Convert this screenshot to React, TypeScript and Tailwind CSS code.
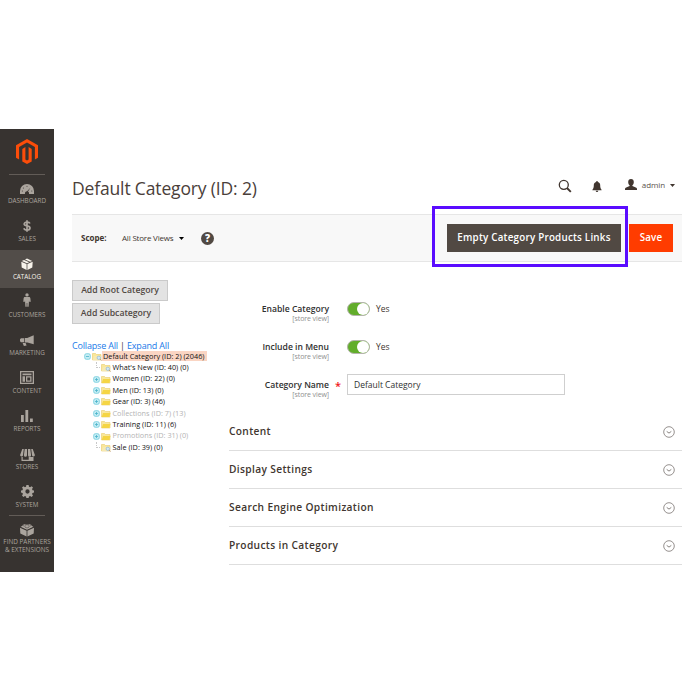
import type { ReactNode } from 'react'
import { clsx } from 'clsx'

type NavItem = {
  label: string
  icon: ReactNode
  active?: boolean
}

type TreeNode = {
  label: string
  /** Leaf nodes show a folder with a magnifier and no expander. */
  leaf?: boolean
  muted?: boolean
}

const navItems: NavItem[] = [
  {
    label: 'DASHBOARD',
    icon: (
      <svg viewBox="0 0 14 10" className="h-[10px] w-[14px]" fill="currentColor">
        <path d="M0 10V7a7 7 0 0 1 14 0v3H9a2.1 2.1 0 0 0-1-2.4l2.6-4.2-3.5 3.9A2.1 2.1 0 0 0 5 10Z" />
        <g fill="#373330">
          <circle cx="2.3" cy="7" r=".5" />
          <circle cx="3.4" cy="4" r=".5" />
          <circle cx="7" cy="2.2" r=".5" />
          <circle cx="11.8" cy="7" r=".5" />
        </g>
      </svg>
    ),
  },
  {
    label: 'SALES',
    icon: (
      <svg viewBox="0 0 8 12" className="h-[12px] w-[8px]" fill="none" stroke="currentColor" strokeWidth="1.7">
        <path d="M6.9 3.6C6.6 2.6 5.5 2.1 4.1 2.1 2.4 2.1 1.2 2.8 1.2 4c0 2.7 5.8 1.1 5.8 4 0 1.3-1.3 2-3 2C2.3 10 1.2 9.3.9 8.2M4 .2v11.6" />
      </svg>
    ),
  },
  {
    label: 'CATALOG',
    active: true,
    icon: (
      <svg viewBox="0 0 12 12" className="h-[12px] w-[12px]" fill="currentColor">
        <path d="M.3 3.7 5.6 6v6L.7 9.6ZM11.7 3.7 6.4 6v6l4.9-2.4ZM.8 2.9 3 2l5.2 2.3L6 5.3ZM4 1.6 6 .6l5.2 2.3-2.1.9Z" />
      </svg>
    ),
  },
  {
    label: 'CUSTOMERS',
    icon: (
      <svg viewBox="0 0 8 14" className="mb-px h-[14px] w-[8px]" fill="currentColor">
        <circle cx="4" cy="1.9" r="1.7" />
        <path d="M2 4h4c1 0 1.3.7 1.4 1.6l.3 3.2-1.3.3-.4-1.6-.4 6.3H4.3V10h-.6v3.8H2.4L2 7.5l-.4 1.6-1.3-.3.3-3.2C.7 4.7 1 4 2 4Z" />
      </svg>
    ),
  },
  {
    label: 'MARKETING',
    icon: (
      <svg viewBox="0 0 14 11" className="h-[11px] w-[14px]" fill="currentColor">
        <path d="M13.7.2v9L7.5 7.4H4.7V3.1h2.5ZM0 4.2l1-1h3v4.1H1l-1-1ZM2.6 7.9h3l1 2.5-2.7.5Z" />
      </svg>
    ),
  },
  {
    label: 'CONTENT',
    icon: (
      <svg viewBox="0 0 14 13" className="h-[13px] w-[14px]" fill="currentColor">
        <path fillRule="evenodd" d="M0 0h14v13H0Zm1.3 1.3v10.4h11.4V1.3Z" />
        <path fillRule="evenodd" d="M2.5 2.4h9v1.9h-9ZM2.5 5.2H5v5.5H2.5ZM6 5.2h5.5v5.5H6Zm1.3 1.3v2.9h2.9V6.5Z" />
      </svg>
    ),
  },
  {
    label: 'REPORTS',
    icon: (
      <svg viewBox="0 0 12 12" className="h-[12px] w-[12px]" fill="currentColor">
        <path d="M0 5h2.8v7H0ZM4.4 0h2.8v12H4.4ZM9 8.6h2.8V12H9Z" />
      </svg>
    ),
  },
  {
    label: 'STORES',
    icon: (
      <svg viewBox="0 0 15 12" className="-mb-px h-[12px] w-[15px]" fill="currentColor">
        <path d="M2.3 0h1.5L3 6.2A1.4 1.4 0 0 1 .1 6ZM4.7 0h2.3v6.2a1.5 1.5 0 0 1-3.1 0ZM8 0h2.3l.8 6.2a1.5 1.5 0 0 1-3.1 0ZM11.2 0h1.5l2.2 6a1.4 1.4 0 0 1-2.9.2ZM1.5 8h1.2v2.7h6V8h4.8v4h-12Z" />
      </svg>
    ),
  },
  {
    label: 'SYSTEM',
    icon: (
      <svg viewBox="0 0 14 14" className="size-[13px]" fill="currentColor">
        <path
          fillRule="evenodd"
          d="M5.8 0h2.4l.4 1.9 1.2.5L11.4 1.3l1.5 1.5-1 1.6.5 1.2 1.6.3v2.3l-1.6.4-.5 1.2 1 1.6-1.5 1.6-1.6-1.1-1.2.5-.4 1.9H5.8l-.4-1.9-1.2-.5-1.6 1.1-1.5-1.6 1-1.6-.5-1.2L0 8.200V5.900l1.6-.3.5-1.2-1-1.6 1.5-1.5 1.6 1.1 1.2-.5ZM7 4.7a2.3 2.3 0 1 0 0 4.6 2.3 2.3 0 0 0 0-4.6Z"
        />
      </svg>
    ),
  },
]

const treeNodes: TreeNode[] = [
  { label: "What's New (ID: 40) (0)", leaf: true },
  { label: 'Women (ID: 22) (0)' },
  { label: 'Men (ID: 13) (0)' },
  { label: 'Gear (ID: 3) (46)' },
  { label: 'Collections (ID: 7) (13)', muted: true },
  { label: 'Training (ID: 11) (6)' },
  { label: 'Promotions (ID: 31) (0)', muted: true },
  { label: 'Sale (ID: 39) (0)', leaf: true },
]

const sections = ['Content', 'Display Settings', 'Search Engine Optimization', 'Products in Category']

function MagentoLogo() {
  return (
    <svg viewBox="0 0 22 25" className="h-[25px] w-[22px]" fill="#fb4d0a">
      <path d="M11 0 22 6.3v12.5l-3.1 1.8V8.1L11 3.6 3.1 8.1v12.5L0 18.8V6.3Z" />
      <path d="M6.3 9.9 9.4 8.1v12.5l1.6.9 1.6-.9V8.1l3.1 1.8v12.5L11 25l-4.7-2.6Z" />
    </svg>
  )
}

function Sidebar() {
  return (
    <nav className="flex h-[443px] w-[54px] shrink-0 flex-col items-center bg-[#373330] text-[#aaa49d]">
      <div className="-mb-px flex h-[46px] w-9 shrink-0 justify-center border-b border-[#625c57] pt-[10px]">
        <MagentoLogo />
      </div>
      {navItems.map((item) => (
        <div
          key={item.label}
          className={clsx(
            'flex h-[38px] w-full shrink-0 flex-col items-center',
            item.active && 'bg-[#524d49] text-[#f7f3eb]',
          )}
        >
          <span className="flex h-5 items-end">{item.icon}</span>
          <span className="mt-[2px] text-[6.3px] leading-[10px] whitespace-nowrap">{item.label}</span>
        </div>
      ))}
      <div className="-mt-px flex w-9 flex-col items-center border-t border-[#625c57] pt-[7px]">
        <svg viewBox="0 0 14 13" className="h-[14px] w-[14px]" fill="currentColor">
          <path d="M0 4.3 6.6 7.2V13L.3 9.9ZM14 4.3 7.4 7.2V13l6.3-3.1Z" />
          <path d="m.6 3.300 2-1V1.400L4.500.7l1.700.6L7 1l1 .3L9.600.7l1.900.7v.9l1.900 1L7 6.300Z" />
          <path d="m2.800 2 1.800.7L6.300 2M7.700 2l1.800.7 1.700-.7M5 3.700l2 .8 2-.8" fill="none" stroke="#373330" strokeWidth=".5" />
        </svg>
        <span className="mt-px text-center text-[6.4px] leading-[8px] whitespace-nowrap">
          FIND PARTNERS
          <br />
          &amp; EXTENSIONS
        </span>
      </div>
    </nav>
  )
}

function Header() {
  return (
    <header className="flex h-[85px] items-center justify-between pt-[33px] pr-[7px]">
      <h1 className="text-[17.5px] leading-6 tracking-[-0.15px] whitespace-nowrap text-[#4a403a]">
        Default Category (ID: 2)
      </h1>
      <div className="flex items-center text-[#41362f]">
        <svg viewBox="0 0 14 14" className="mt-[-4px] size-[14px]" fill="none" stroke="currentColor">
          <circle cx="5.8" cy="5.8" r="4.5" strokeWidth="1.3" />
          <path d="m9 9 3.8 3.8" strokeWidth="1.9" />
        </svg>
        <svg viewBox="0 0 10 11" className="mt-[-3px] ml-5 h-[11px] w-[10px]" fill="currentColor">
          <path d="M5 0c.6 0 .9.4.9.9C7.5 1.3 8.200 2.500 8.200 4.200c0 2.500.5 3.400 1.400 4.500v.5H.4v-.5C1.300 7.600 1.800 6.700 1.800 4.200 1.800 2.500 2.500 1.300 4.100.9 4.100.4 4.400 0 5 0ZM3.700 9.800h2.600a1.300 1.200 0 0 1-2.600 0Z" />
        </svg>
        <svg viewBox="0 0 12 11" className="mt-[-7px] ml-[23px] h-[11px] w-[12px]" fill="currentColor">
          <path d="M6 0c1.8 0 2.8 1.2 2.8 3 0 1.5-.5 2.6-1.4 3.3v.8l3.4 1.3c.8.3 1.2.8 1.2 1.6v1H0v-1c0-.8.4-1.3 1.2-1.6l3.4-1.3v-.8C3.7 5.6 3.2 4.5 3.2 3 3.2 1.2 4.2 0 6 0Z" />
        </svg>
        <span className="mt-[-7px] ml-[5px] text-[8px] tracking-[-0.1px] text-[#5c534d]">admin</span>
        <svg viewBox="0 0 5 3" className="mt-[-6px] ml-[5px] h-[3px] w-[5px]" fill="currentColor">
          <path d="M0 0h5L2.5 3Z" />
        </svg>
      </div>
    </header>
  )
}

function Toolbar() {
  return (
    <div className="flex h-[48px] items-center border-y border-[#e6e6e6] bg-[#f8f8f8] pr-[9px] pl-[9px] text-[#41362f]">
      <span className="w-[41px] text-[8px] font-bold">Scope:</span>
      <span className="w-[51px] text-[8px] tracking-[-0.2px] whitespace-nowrap">All Store Views</span>
      <svg viewBox="0 0 5 3" className="ml-[6px] h-[3px] w-[5px]" fill="#000">
        <path d="M0 0h5L2.5 3Z" />
      </svg>
      <span className="ml-[17px] flex size-[13px] items-center justify-center rounded-full bg-[#514943] text-[10px] leading-none font-extrabold text-white">
        ?
      </span>
      <div className="relative ml-auto flex gap-2">
        <button className="h-7 w-[174px] bg-[#514943] pt-px text-[9.8px] font-semibold tracking-[0.23px] whitespace-nowrap text-white">
          Empty Category Products Links
        </button>
        <button className="h-7 w-11 bg-[#ff3c00] pt-px text-[9.8px] font-semibold tracking-[0.2px] text-white">Save</button>
        <span className="pointer-events-none absolute top-[-18px] left-[-15px] h-[61px] w-[196px] border-3 border-[#5a0cff]" />
      </div>
    </div>
  )
}

function FolderIcon({ leaf }: { leaf?: boolean }) {
  return (
    <svg viewBox="0 0 10 9" className="h-[9px] w-[10px] shrink-0">
      <path d="M.5 1.5h3l1 1H9V8H.5Z" fill="#f9e79b" stroke="#e8cb6c" strokeWidth=".6" />
      <path d="M2 4h7.5L8.3 8H.7Z" fill={leaf ? '#f7e9b0' : '#f5d544'} />
      {leaf && (
        <g fill="#d5e8f6" stroke="#8db6d6" strokeWidth=".7">
          <circle cx="6.8" cy="5.8" r="1.7" />
          <path d="m8 7 1.6 1.7" stroke="#b58b5b" />
        </g>
      )}
    </svg>
  )
}

function Expander({ open }: { open?: boolean }) {
  return (
    <svg viewBox="0 0 7 7" className="size-[7px] shrink-0" fill="none" stroke="#6fcbdc">
      <rect x=".7" y=".7" width="5.6" height="5.6" rx="1.6" fill="#c5edf4" strokeWidth=".8" />
      <path d={open ? 'M2 3.5h3' : 'M2 3.5h3M3.5 2v3'} stroke="#4bb3ca" strokeWidth=".8" />
    </svg>
  )
}

function CategoryTree() {
  return (
    <div className="text-[7.3px] leading-[11.42px] whitespace-nowrap text-[#111]">
      <div className="flex h-[11.42px] items-center pl-[12px]">
        <Expander open />
        <span className="ml-px">
          <FolderIcon leaf />
        </span>
        <span className="h-[10px] w-[105px] bg-[#fad5c3] px-px leading-[10px]">Default Category (ID: 2) (2046)</span>
      </div>
      {treeNodes.map((node) => (
        <div key={node.label} className="flex h-[11.42px] items-center pl-[21px]">
          {node.leaf ? (
            <span className="flex h-full w-[7px] justify-end">
              <span className="h-[6px] w-1 border-b border-l border-dotted border-[#c8c8c8]" />
            </span>
          ) : (
            <Expander />
          )}
          <span className="ml-px">
            <FolderIcon leaf={node.leaf} />
          </span>
          <span className={clsx('ml-[1.5px]', node.muted && 'text-[#b3b3b3]')}>{node.label}</span>
        </div>
      ))}
    </div>
  )
}

function CategoryPanel() {
  return (
    <aside className="w-[157px] shrink-0 pt-[18px]">
      <div className="flex flex-col items-start gap-[2px] text-[8.7px] font-semibold text-[#514943]">
        <button className="h-[21px] w-[96px] border border-[#cacaca] bg-[#e3e3e3] pt-px tracking-[-0.03px] whitespace-nowrap">
          Add Root Category
        </button>
        <button className="h-[21px] w-[88px] border border-[#cacaca] bg-[#e3e3e3] pt-px tracking-[-0.03px] whitespace-nowrap">
          Add Subcategory
        </button>
      </div>
      <div className="mt-[15.5px] text-[9px] leading-[11px] tracking-[-0.18px] whitespace-nowrap text-[#41362f]">
        <a className="text-[#1979e8]">Collapse All</a> | <a className="text-[#1979e8]">Expand All</a>
      </div>
      <CategoryTree />
    </aside>
  )
}

function Field({ label, required, children }: { label: string; required?: boolean; children: ReactNode }) {
  return (
    <div className="flex h-[38px]">
      <div className="w-[100px] pt-[1.5px] text-right">
        <div className="text-[8.6px] leading-[11px] font-semibold whitespace-nowrap text-[#303030]">{label}</div>
        <div className="text-[7px] leading-[8px] tracking-[-0.1px] text-[#8f8f8f]">[store view]</div>
      </div>
      <div className="w-[18px] pt-px pl-[6px] text-[11px] leading-[14px] font-semibold text-[#f01818]">{required && '*'}</div>
      {children}
    </div>
  )
}

function Toggle() {
  return (
    <div className="flex h-[14px] items-center gap-[6px] text-[8.5px] text-[#41362f]">
      <span className="flex h-[14px] w-[23px] justify-end rounded-full border border-[#b4b4ac] bg-[#62ad2b]">
        <span className="size-3 rounded-full bg-white" />
      </span>
      Yes
    </div>
  )
}

function CategoryForm() {
  return (
    <section className="w-[453px] pt-10">
      <Field label="Enable Category">
        <Toggle />
      </Field>
      <Field label="Include in Menu">
        <Toggle />
      </Field>
      <Field label="Category Name" required>
        <div className="mt-[-4px] flex h-[21px] w-[218px] items-center border border-[#cfcfcf] px-[6px] pt-px text-[8.5px] text-[#303030]">
          Default Category
        </div>
      </Field>
      <div className="-mt-[3px]">
        {sections.map((title) => (
          <div key={title} className="flex h-[38px] items-center justify-between border-b border-[#dedede] pt-px pr-[7px]">
            <h2 className="text-[10.2px] font-semibold tracking-[0.35px] text-[#41362f]">{title}</h2>
            <svg viewBox="0 0 12 12" className="size-3" fill="none" stroke="#7b7572">
              <circle cx="6" cy="6" r="5.3" strokeWidth=".8" />
              <path d="M3.7 5.4 6 7.1l2.3-1.7" strokeWidth=".9" />
            </svg>
          </div>
        ))}
      </div>
    </section>
  )
}

export default function App() {
  return (
    <div className="flex h-[700px] w-[700px] items-start overflow-hidden bg-white pt-[129px] font-['Open_Sans','Noto_Sans',sans-serif]">
      <Sidebar />
      <main className="ml-[18px] w-[610px]">
        <Header />
        <Toolbar />
        <div className="flex">
          <CategoryPanel />
          <CategoryForm />
        </div>
      </main>
    </div>
  )
}
